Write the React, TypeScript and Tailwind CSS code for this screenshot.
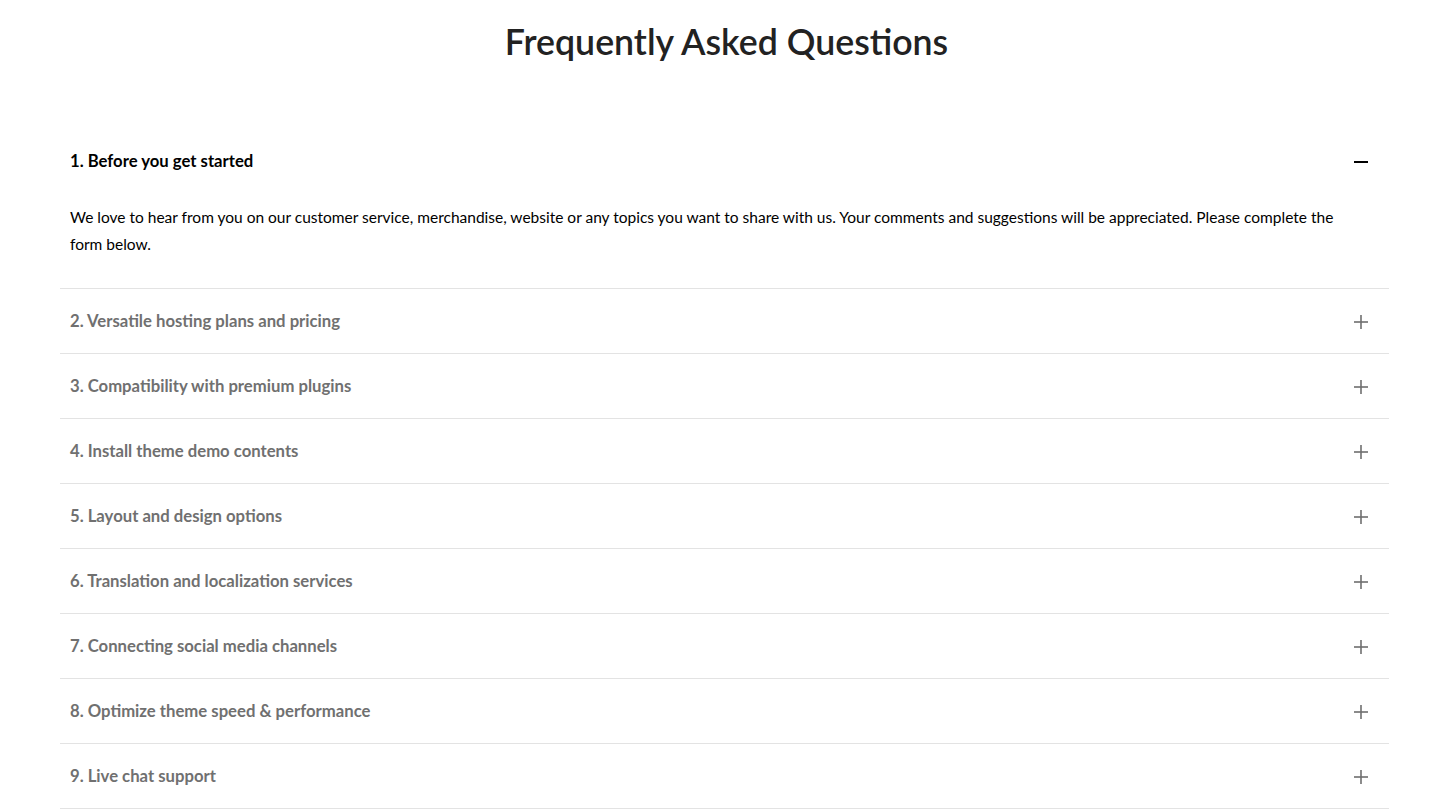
import { useState } from "react";

const items = [
  {
    q: "1. Before you get started",
    a: "We love to hear from you on our customer service, merchandise, website or any topics you want to share with us. Your comments and suggestions will be appreciated. Please complete the form below.",
  },
  { q: "2. Versatile hosting plans and pricing", a: "" },
  { q: "3. Compatibility with premium plugins", a: "" },
  { q: "4. Install theme demo contents", a: "" },
  { q: "5. Layout and design options", a: "" },
  { q: "6. Translation and localization services", a: "" },
  { q: "7. Connecting social media channels", a: "" },
  { q: "8. Optimize theme speed & performance", a: "" },
  { q: "9. Live chat support", a: "" },
];

function Toggle({ open }: { open: boolean }) {
  return (
    <svg width="14" height="14" viewBox="0 0 14 14" className="shrink-0">
      <path
        d="M0 7h14"
        stroke={open ? "#000" : "#6f6f6f"}
        strokeWidth={open ? 2 : 1.6}
      />
      {!open && <path d="M7 0v14" stroke="#6f6f6f" strokeWidth={1.6} />}
    </svg>
  );
}

export default function App() {
  const [open, setOpen] = useState(0);

  return (
    <main className="min-h-screen bg-white font-['Lato',sans-serif]">
      <h1 className="pt-[19px] text-center text-[35.7px] leading-[46px] font-semibold text-[#222]">
        Frequently Asked Questions
      </h1>

      <div className="ml-[60px] mr-[64px] mt-[64px]">
        {items.map((it, i) => {
          const isOpen = open === i;
          return (
            <div
              key={i}
              className={i === items.length - 1 ? "border-b border-[#e3e3e3]" : ""}
            >
              {i > 0 && <div className="border-t border-[#e3e3e3]" />}
              <button
                onClick={() => setOpen(isOpen ? -1 : i)}
                className="flex h-[64px] w-full items-center justify-between pt-[2px] pl-[10px] pr-[21px] text-left"
              >
                <span
                  className={`text-[16.7px] font-bold ${
                    isOpen ? "text-black" : "text-[#707070]"
                  }`}
                >
                  {it.q}
                </span>
                <Toggle open={isOpen} />
              </button>
              {isOpen && it.a && (
                <p className="pl-[10px] pr-[40px] pb-[30px] pt-[11px] text-[15.5px] leading-[27px] text-black">
                  {it.a}
                </p>
              )}
            </div>
          );
        })}
      </div>
    </main>
  );
}
